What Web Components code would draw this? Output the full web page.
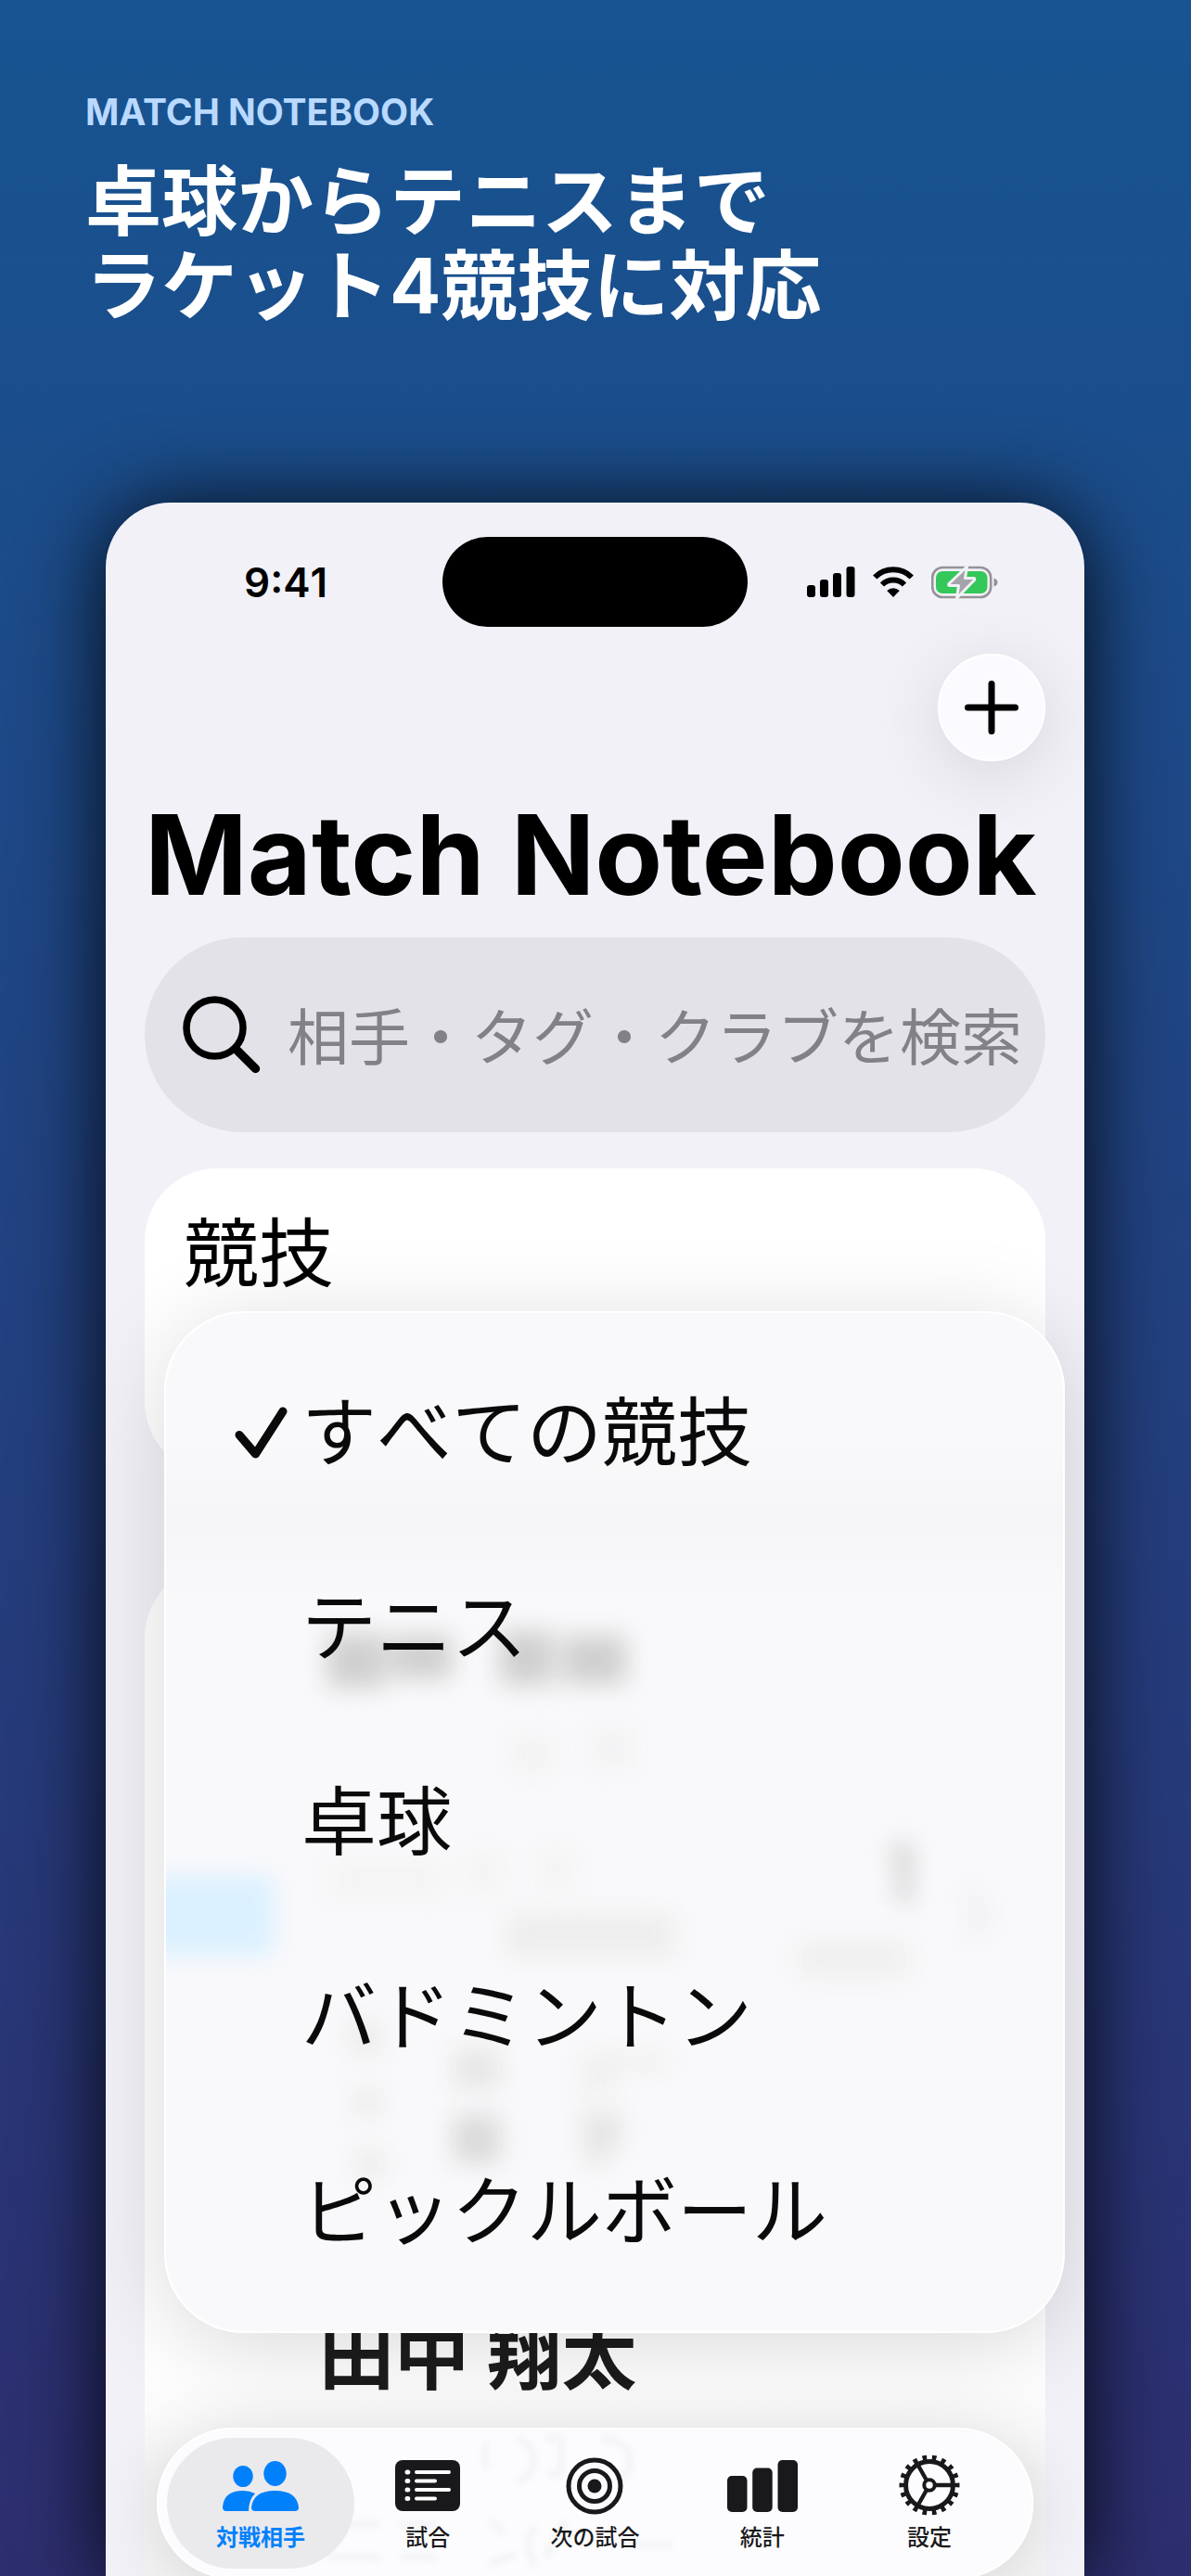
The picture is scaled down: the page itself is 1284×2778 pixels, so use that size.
<!DOCTYPE html>
<html lang="ja">
<head>
<meta charset="utf-8">
<meta name="viewport" content="width=device-width, initial-scale=1">
<title>Match Notebook</title>
<style>
    body {
        margin: 0;
        font-family: Inter, "Noto Sans CJK JP", sans-serif;
        font-kerning: none;
        color: #000;
    }
</style>
</head>
<body>
<promo-page>
    <promo-heading slot="heading" eyebrow="MATCH NOTEBOOK">卓球からテニスまで<br>ラケット4競技に対応</promo-heading>
    <phone-frame>
        <status-bar slot="status" time="9:41"></status-bar>
        <nav-header heading="Match Notebook"></nav-header>
        <search-field placeholder="相手・タグ・クラブを検索"></search-field>
        <sport-card label="競技">
            <sport-menu>
                <menu-item checked>すべての競技</menu-item>
                <menu-item>テニス</menu-item>
                <menu-item>卓球</menu-item>
                <menu-item>バドミントン</menu-item>
                <menu-item>ピックルボール</menu-item>
            </sport-menu>
        </sport-card>
        <opponent-list>田中 翔太</opponent-list>
        <tab-bar slot="tabs">
            <tab-item icon="people" selected>対戦相手</tab-item>
            <tab-item icon="list">試合</tab-item>
            <tab-item icon="target">次の試合</tab-item>
            <tab-item icon="bars">統計</tab-item>
            <tab-item icon="gear">設定</tab-item>
        </tab-bar>
    </phone-frame>
</promo-page>

<script>
class PromoPage extends HTMLElement {
    constructor() {
        super();
        this.attachShadow({ mode: 'open' }).innerHTML = `
            <style>
                :host {
                    display: flex;
                    flex-direction: column;
                    box-sizing: border-box;
                    height: 100vh;
                    min-height: 2600px;
                    padding: 96px 115px 0 114px;
                    overflow: hidden;
                    background: linear-gradient(#175491, #2d2e6f);
                }
                header {
                    height: 446px;
                    margin-left: -22px;
                }
            </style>
            <header><slot name="heading"></slot></header>
            <slot></slot>
        `;
    }
}

class PromoHeading extends HTMLElement {
    constructor() {
        super();
        this.attachShadow({ mode: 'open' }).innerHTML = `
            <style>
                :host {
                    display: block;
                }
                p {
                    margin: 0 0 26px;
                    font-size: 39px;
                    font-weight: 700;
                    font-kerning: normal;
                    line-height: 50px;
                    color: #b9d9ff;
                }
                h1 {
                    margin: 0;
                    font-size: 82px;
                    font-weight: 700;
                    line-height: 91px;
                    color: #fff;
                }
            </style>
            <p>${this.getAttribute('eyebrow')}</p>
            <h1><slot></slot></h1>
        `;
    }
}

class PhoneFrame extends HTMLElement {
    constructor() {
        super();
        this.attachShadow({ mode: 'open' }).innerHTML = `
            <style>
                :host {
                    display: flex;
                    flex: 1;
                    min-height: 0;
                    border-radius: 70px 70px 0 0;
                    box-shadow: 0 6px 90px rgba(0, 0, 0, 0.9);
                }
                .screen {
                    position: relative;
                    flex: 1;
                    display: flex;
                    flex-direction: column;
                    border-radius: 70px 70px 0 0;
                    overflow: hidden;
                    background: #f2f1f7;
                }
                main {
                    flex: 1;
                    display: flex;
                    flex-direction: column;
                    padding: 29px 42px 0;
                }
                .tabs {
                    position: absolute;
                    left: 55px;
                    right: 55px;
                    bottom: -3px;
                }
            </style>
            <div class="screen">
                <slot name="status"></slot>
                <main><slot></slot></main>
                <div class="tabs"><slot name="tabs"></slot></div>
            </div>
        `;
    }
}

class StatusBar extends HTMLElement {
    constructor() {
        super();
        this.attachShadow({ mode: 'open' }).innerHTML = `
            <style>
                :host {
                    display: grid;
                    grid-template-columns: 1fr 329px 1fr;
                    align-items: center;
                    margin-top: 37px;
                }
                time {
                    padding-left: 149px;
                    font-size: 44px;
                    font-weight: 600;
                }
                .island {
                    height: 97px;
                    border-radius: 49px;
                    background: #000;
                }
                .icons {
                    display: flex;
                    align-items: center;
                    gap: 19px;
                    padding-left: 64px;
                }
                svg {
                    display: block;
                }
            </style>
            <time>${this.getAttribute('time')}</time>
            <div class="island"></div>
            <div class="icons">
                <svg width="52" height="34" viewBox="0 0 52 34">
                    <rect x="0" y="20" width="9" height="13" rx="3"/>
                    <rect x="14" y="14" width="9" height="19" rx="3"/>
                    <rect x="28" y="7" width="9" height="26" rx="3"/>
                    <rect x="42.500" y="0" width="9" height="33" rx="3"/>
                </svg>
                <svg width="44" height="34" viewBox="0 0 44 34" fill="none" stroke="#000" stroke-width="6">
                    <path d="M2.200 11.500a28 28 0 0 1 39.600 0"/>
                    <path d="M10 19.500a17 17 0 0 1 24 0"/>
                    <path d="M22 33l-6.800-6.900a9.800 9.800 0 0 1 13.600 0z" fill="#000" stroke="none"/>
                </svg>
                <svg width="72" height="36" viewBox="0 0 72 36">
                    <rect x="1.200" y="2" width="63" height="32" rx="11" fill="none" stroke="#949397" stroke-width="2.600"/>
                    <rect x="5" y="6" width="55.500" height="24" rx="7" fill="#34c759"/>
                    <path d="M67.500 13.500q4 1.500 4 4.500t-4 4.500z" fill="#949397"/>
                    <path d="M38.500 1L19 19.500q-1 2 1 2H29.500L27.500 35 46.500 15.500q1-2-1-2H36.500z" fill="#a5a4aa" stroke="#f2f1f7" stroke-width="3" stroke-linejoin="round"/>
                </svg>
            </div>
        `;
    }
}

class NavHeader extends HTMLElement {
    constructor() {
        super();
        this.attachShadow({ mode: 'open' }).innerHTML = `
            <style>
                :host {
                    display: flex;
                    flex-direction: column;
                }
                button {
                    align-self: flex-end;
                    display: grid;
                    place-items: center;
                    width: 116px;
                    height: 116px;
                    padding: 0;
                    border: 2px solid #fff;
                    border-radius: 50%;
                    background: #fafaff;
                    box-shadow: 0 14px 80px rgba(0, 0, 0, 0.12);
                }
                h2 {
                    margin: 28px 0 16px 0;
                    font-size: 119px;
                    font-weight: 700;
                    font-kerning: normal;
                    line-height: 146px;
                    white-space: nowrap;
                }
            </style>
            <button type="button" aria-label="追加">
                <svg width="58" height="58" viewBox="0 0 58 58" stroke="#000" stroke-width="7" stroke-linecap="round">
                    <path d="M29 3.500v51M3.500 29h51"/>
                </svg>
            </button>
            <h2>${this.getAttribute('heading')}</h2>
        `;
    }
}

class SearchField extends HTMLElement {
    constructor() {
        super();
        this.attachShadow({ mode: 'open' }).innerHTML = `
            <style>
                :host {
                    display: block;
                }
                label {
                    display: flex;
                    align-items: center;
                    gap: 28px;
                    height: 210px;
                    padding: 0 0 0 40px;
                    border-radius: 105px;
                    background: #e3e2e8;
                }
                svg {
                    flex: none;
                }
                input {
                    flex: 1;
                    min-width: 0;
                    height: 100px;
                    padding: 6px 0 0;
                    border: 0;
                    outline: 0;
                    background: none;
                    font: inherit;
                    font-size: 66px;
                }
                input::placeholder {
                    color: #828187;
                    opacity: 1;
                }
            </style>
            <label>
                <svg width="86" height="86" viewBox="0 0 86 86" fill="none" stroke="#000" stroke-linecap="round">
                    <circle cx="35.500" cy="35.500" r="30.500" stroke-width="7.500"/>
                    <path d="M58.500 58.500L79.500 79.500" stroke-width="9.500"/>
                </svg>
                <input type="search" aria-label="検索" placeholder="${this.getAttribute('placeholder')}">
            </label>
        `;
    }
}

class SportCard extends HTMLElement {
    constructor() {
        super();
        this.attachShadow({ mode: 'open' }).innerHTML = `
            <style>
                :host {
                    display: block;
                    position: relative;
                    z-index: 1;
                    box-sizing: border-box;
                    height: 330px;
                    margin-top: 39px;
                    padding: 32px 42px;
                    border-radius: 78px;
                    background: #fff;
                }
                span {
                    font-size: 81px;
                    line-height: 120px;
                    display: block;
                }
                /* the open menu hangs over the card and the list below */
                .popup {
                    position: absolute;
                    top: 154px;
                    left: 21px;
                    right: -21px;
                }
            </style>
            <span>${this.getAttribute('label')}</span>
            <div class="popup"><slot></slot></div>
        `;
    }
}

class SportMenu extends HTMLElement {
    constructor() {
        super();
        this.attachShadow({ mode: 'open' }).innerHTML = `
            <style>
                :host {
                    display: block;
                    position: relative;
                    border-radius: 86px;
                    background: #f9f9fb;
                    box-shadow: 0 16px 100px rgba(0, 0, 0, 0.15);
                }
                .menu {
                    position: relative;
                    padding: 17px 0 31px;
                    border: 2px solid #fff;
                    border-radius: 86px;
                }
                /* list rows showing softly through the glass */
                .glass {
                    position: absolute;
                    inset: 0;
                    width: 100%;
                    height: 100%;
                    border-radius: 86px;
                }
            </style>
            <svg class="glass" viewBox="0 0 971 1102" preserveAspectRatio="none" aria-hidden="true">
                <defs>
                    <filter id="soft" x="-50%" y="-50%" width="200%" height="200%" color-interpolation-filters="sRGB"><feGaussianBlur stdDeviation="13"/></filter>
                    <filter id="wide" x="-50%" y="-200%" width="200%" height="500%" color-interpolation-filters="sRGB"><feGaussianBlur stdDeviation="22"/></filter>
                </defs>
                <rect x="-100" y="190" width="1171" height="70" fill="#f5f5f8" filter="url(#wide)"/>
                <g filter="url(#soft)">
                    <path d="M176 348h62v58h-62zM244 350h66v46h-66zM362 345h58v58h-58zM430 350h68v52h-68z" fill="#cfcfcf"/>
                    <path d="M375 460h44v36h-44zM460 450h44v42h-44z" fill="#f2f2f3"/>
                    <path d="M178 598h125v32h-125zM325 585h40v40h-40zM405 580h35v45h-35z" fill="#f3f3f3"/>
                    <rect x="-30" y="610" width="148" height="84" fill="#daf0ff"/>
                    <rect x="370" y="650" width="180" height="46" fill="#ededed"/>
                    <path d="M780 584l14-10h10v64h-12v-48z" fill="#c6c6c6"/>
                    <rect x="684" y="680" width="120" height="38" fill="#efefef"/>
                    <path d="M866 625l18 26-16 26" fill="none" stroke="#e8e8ec" stroke-width="9"/>
                    <rect x="312" y="796" width="50" height="42" fill="#e6e6e6"/>
                    <rect x="312" y="868" width="50" height="50" fill="#d9d9d9"/>
                    <path d="M450 800h94v18h-60v26h-34z" fill="#efefef"/>
                    <path d="M448 864h46v26l-20 30h-18z" fill="#e5e5e5"/>
                    <path d="M204 840h30v28h-30zM206 905h32v28h-32zM200 765h34v36h-34z" fill="#ebebeb"/>
                </g>
            </svg>
            <div class="menu" role="menu"><slot></slot></div>
        `;
    }
}

class MenuItem extends HTMLElement {
    constructor() {
        super();
        const checked = this.hasAttribute('checked');
        this.attachShadow({ mode: 'open' }).innerHTML = `
            <style>
                :host {
                    display: block;
                }
                button {
                    display: grid;
                    grid-template-columns: 73px 1fr;
                    align-items: center;
                    width: 100%;
                    height: 210px;
                    padding: 0 0 0 73px;
                    border: 0;
                    background: none;
                    font: inherit;
                    font-kerning: inherit;
                    font-size: 81px;
                    text-align: left;
                    white-space: nowrap;
                    color: #0a0a0a;
                }
                svg {
                    margin-top: 12px;
                }
                span {
                    grid-column: 2;
                }
            </style>
            <button type="button" role="menuitemradio" aria-checked="${checked}">
                ${checked ? `<svg width="60" height="58" viewBox="0 0 60 58" fill="none" stroke="#0a0a0a" stroke-width="9" stroke-linecap="round" stroke-linejoin="round">
                    <path d="M6 32.500L23.500 53 53 7"/>
                </svg>` : ''}
                <span><slot></slot></span>
            </button>
        `;
    }
}

class OpponentList extends HTMLElement {
    constructor() {
        super();
        this.attachShadow({ mode: 'open' }).innerHTML = `
            <style>
                :host {
                    display: block;
                    flex: 1;
                    margin-top: 98px;
                    border-radius: 78px 78px 0 0;
                    background: linear-gradient(#fff 80%, #f4f4f5 90%);
                }
                .name {
                    padding: 787px 0 0 188px;
                    font-size: 81px;
                    font-weight: 700;
                    line-height: 120px;
                    color: #1c1c1c;
                    font-family: "Noto Sans CJK JP", sans-serif;
                }
            </style>
            <div class="name"><slot></slot></div>
        `;
    }
}

class TabBar extends HTMLElement {
    constructor() {
        super();
        this.attachShadow({ mode: 'open' }).innerHTML = `
            <style>
                :host {
                    display: block;
                    position: relative;
                    border-radius: 82px;
                    background: #fcfcfe;
                    box-shadow: 0 10px 70px rgba(0, 0, 0, 0.12);
                }
                nav {
                    position: relative;
                    display: grid;
                    grid-template-columns: repeat(5, 1fr);
                    padding: 9px 20px;
                    border: 2px solid #fff;
                    border-radius: 82px;
                }
                .glass {
                    position: absolute;
                    left: 0;
                    top: 0;
                    width: 100%;
                    height: 100%;
                }
            </style>
            <svg class="glass" viewBox="0 0 945 163" preserveAspectRatio="none" aria-hidden="true">
                <filter id="soft" color-interpolation-filters="sRGB"><feGaussianBlur stdDeviation="3"/></filter>
                <g fill="none" stroke="#f3f3f5" stroke-width="7" filter="url(#soft)">
                    <path d="M354 16v28M388 12q22 8 18 26t-18 20M420 12h16v38h-14M480 12q28 2 30 20t-14 24"/>
                    <path d="M190 104h50M184 140h58M262 104h40M262 140h40M360 100l14 14M358 146q16-2 28-10M408 106q-14 20 0 44M440 100q-8 20-22 40M500 126h56"/>
                </g>
            </svg>
            <nav><slot></slot></nav>
        `;
    }
}

const icons = {
    people: `<svg width="84" height="64" viewBox="0 0 84 64" fill="currentColor">
        <ellipse cx="23" cy="22.500" rx="10.700" ry="11.500"/>
        <path d="M5 60Q1 60 1 56 2 38 23 38q7 0 13 3-7 7-7 19z"/>
        <ellipse cx="57.500" cy="19.500" rx="12.200" ry="13.500"/>
        <path d="M36 60q-4 0-4-4 2-18 25.500-18T83 56q0 4-4 4z"/>
    </svg>`,
    list: `<svg width="72" height="64" viewBox="0 0 72 64">
        <rect x="1" y="5" width="70" height="55" rx="8" fill="currentColor"/>
        <g stroke="#fff" stroke-width="4" stroke-linecap="round">
            <path d="M24 18h35M24 27.500h20M24 37h35M24 46.500h20"/>
            <path d="M14 18h.8M14 27.500h.8M14 37h.8M14 46.500h.8" stroke-width="5"/>
        </g>
    </svg>`,
    target: `<svg width="64" height="64" viewBox="0 0 64 64" fill="none" stroke="currentColor" stroke-width="5">
        <circle cx="32" cy="33" r="28"/>
        <circle cx="32" cy="33" r="16.500"/>
        <circle cx="32" cy="33" r="7.500" fill="currentColor" stroke="none"/>
    </svg>`,
    bars: `<svg width="78" height="64" viewBox="0 0 78 64" fill="currentColor">
        <rect x="1" y="22" width="21.500" height="39" rx="5"/>
        <rect x="28.200" y="13.500" width="21.500" height="47.500" rx="5"/>
        <rect x="55.500" y="5" width="21.500" height="56" rx="5"/>
    </svg>`,
    gear: `<svg width="66" height="66" viewBox="0 0 66 66" fill="none" stroke="currentColor">
        <circle cx="33" cy="33" r="25.500" stroke-width="5"/>
        <circle cx="33" cy="33" r="29.500" stroke-width="6" pathLength="36" stroke-dasharray="0.900 1.100" stroke-dashoffset="0.450"/>
        <circle cx="33" cy="33" r="5.700" stroke-width="4"/>
        <path d="M40 33h17M29.500 27L21 12M29.500 39L21 54" stroke-width="4.400"/>
    </svg>`
};

class TabItem extends HTMLElement {
    constructor() {
        super();
        this.attachShadow({ mode: 'open' }).innerHTML = `
            <style>
                :host {
                    display: block;
                }
                :host([selected]) {
                    margin: 0 -11px;
                }
                button {
                    display: flex;
                    flex-direction: column;
                    align-items: center;
                    gap: 5px;
                    width: 100%;
                    height: 141px;
                    padding: 17px 0 0;
                    border: 0;
                    border-radius: 71px;
                    background: none;
                    font: inherit;
                    font-size: 24px;
                    font-weight: 500;
                    line-height: 36px;
                    white-space: nowrap;
                    color: #19191b;
                }
                :host([selected]) button {
                    background: #eaeaec;
                    color: #0080fb;
                    font-weight: 700;
                }
                .icon {
                    display: grid;
                    place-items: center;
                    height: 68px;
                }
            </style>
            <button type="button">
                <span class="icon">${icons[this.getAttribute('icon')]}</span>
                <slot></slot>
            </button>
        `;
    }
}

customElements.define('promo-page', PromoPage);
customElements.define('promo-heading', PromoHeading);
customElements.define('phone-frame', PhoneFrame);
customElements.define('status-bar', StatusBar);
customElements.define('nav-header', NavHeader);
customElements.define('search-field', SearchField);
customElements.define('sport-card', SportCard);
customElements.define('sport-menu', SportMenu);
customElements.define('menu-item', MenuItem);
customElements.define('opponent-list', OpponentList);
customElements.define('tab-bar', TabBar);
customElements.define('tab-item', TabItem);
</script>
</body>
</html>
